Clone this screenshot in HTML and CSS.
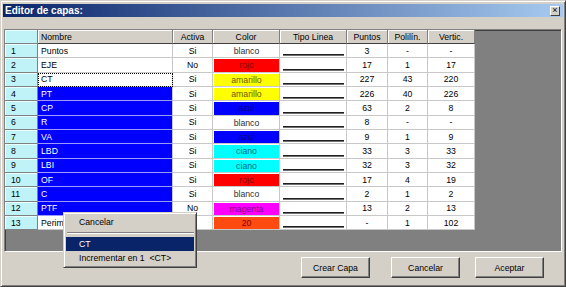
FILE: index.html
```html
<!DOCTYPE html>
<html>
<head>
<meta charset="utf-8">
<link rel="stylesheet" href="styles.css">
</head>
<body>
<div class="window">
  <div class="titlebar">
    <span class="title">Editor de capas:</span>
    <span class="close">&#215;</span>
  </div>

  <div class="panel">
    <div class="grid">
      <div class="idx"></div>
      <div class="hd left">Nombre</div>
      <div class="hd">Activa</div>
      <div class="hd">Color</div>
      <div class="hd">Tipo Linea</div>
      <div class="hd">Puntos</div>
      <div class="hd">Polilín.</div>
      <div class="hd">Vertic.</div>

      <div class="idx">1</div><div class="cell name">Puntos</div><div class="cell">Si</div><div class="cell col"><span class="c-white">blanco</span></div><div class="cell line"><span></span></div><div class="cell">3</div><div class="cell">-</div><div class="cell">-</div>
      <div class="idx">2</div><div class="cell name">EJE</div><div class="cell">No</div><div class="cell col"><span class="c-red">rojo</span></div><div class="cell line"><span></span></div><div class="cell">17</div><div class="cell">1</div><div class="cell">17</div>
      <div class="idx">3</div><div class="cell name focus">CT</div><div class="cell">Si</div><div class="cell col"><span class="c-yellow">amarillo</span></div><div class="cell line"><span></span></div><div class="cell">227</div><div class="cell">43</div><div class="cell">220</div>
      <div class="idx">4</div><div class="cell name sel">PT</div><div class="cell">Si</div><div class="cell col"><span class="c-yellow">amarillo</span></div><div class="cell line"><span></span></div><div class="cell">226</div><div class="cell">40</div><div class="cell">226</div>
      <div class="idx">5</div><div class="cell name sel">CP</div><div class="cell">Si</div><div class="cell col"><span class="c-blue">azul</span></div><div class="cell line"><span></span></div><div class="cell">63</div><div class="cell">2</div><div class="cell">8</div>
      <div class="idx">6</div><div class="cell name sel">R</div><div class="cell">Si</div><div class="cell col"><span class="c-white">blanco</span></div><div class="cell line"><span></span></div><div class="cell">8</div><div class="cell">-</div><div class="cell">-</div>
      <div class="idx">7</div><div class="cell name sel">VA</div><div class="cell">Si</div><div class="cell col"><span class="c-blue">azul</span></div><div class="cell line"><span></span></div><div class="cell">9</div><div class="cell">1</div><div class="cell">9</div>
      <div class="idx">8</div><div class="cell name sel">LBD</div><div class="cell">Si</div><div class="cell col"><span class="c-cyan">ciano</span></div><div class="cell line"><span></span></div><div class="cell">33</div><div class="cell">3</div><div class="cell">33</div>
      <div class="idx">9</div><div class="cell name sel">LBI</div><div class="cell">Si</div><div class="cell col"><span class="c-cyan">ciano</span></div><div class="cell line"><span></span></div><div class="cell">32</div><div class="cell">3</div><div class="cell">32</div>
      <div class="idx">10</div><div class="cell name sel">OF</div><div class="cell">Si</div><div class="cell col"><span class="c-red">rojo</span></div><div class="cell line"><span></span></div><div class="cell">17</div><div class="cell">4</div><div class="cell">19</div>
      <div class="idx">11</div><div class="cell name sel">C</div><div class="cell">Si</div><div class="cell col"><span class="c-white">blanco</span></div><div class="cell line"><span></span></div><div class="cell">2</div><div class="cell">1</div><div class="cell">2</div>
      <div class="idx">12</div><div class="cell name sel">PTF</div><div class="cell">No</div><div class="cell col"><span class="c-magenta">magenta</span></div><div class="cell line"><span></span></div><div class="cell">13</div><div class="cell">2</div><div class="cell">13</div>
      <div class="idx">13</div><div class="cell name">Perimetro</div><div class="cell">Si</div><div class="cell col"><span class="c-orange">20</span></div><div class="cell line"><span></span></div><div class="cell">-</div><div class="cell">1</div><div class="cell">102</div>
    </div>
  </div>

  <div class="buttons">
    <button class="btn btn-first">Crear Capa</button>
    <button class="btn">Cancelar</button>
    <button class="btn">Aceptar</button>
  </div>

  <div class="menu">
    <div class="item">Cancelar</div>
    <div class="sep"></div>
    <div class="item active">CT</div>
    <div class="item">Incrementar en 1&nbsp;&nbsp;&lt;CT&gt;</div>
  </div>
</div>
</body>
</html>
```

FILE: styles.css
```css
body {
  margin: 0;
  font-family: "Liberation Sans", Arial, sans-serif;
  font-size: 8.7px;
  color: #000;
}

.window {
  position: relative;
  box-sizing: border-box;
  width: 566px;
  height: 287px;
  background: #d4d0c8;
  border: 1px solid;
  border-color: #d4d0c8 #404040 #404040 #d4d0c8;
  box-shadow: inset 1px 1px #fff, inset -1px -1px #808080;
  padding: 3px 2px 0 2px;
}

.titlebar {
  height: 13px;
  display: flex;
  align-items: center;
  justify-content: space-between;
  padding: 0 3px 0 2px;
  background: linear-gradient(to right, #0a246a, #a6caf0);
}
.title {
  color: #fff;
  font-weight: bold;
  font-size: 10px;
}
.close {
  width: 8px;
  height: 8px;
  line-height: 7px;
  font-size: 9px;
  text-align: center;
  background: #d4d0c8;
  color: #000;
  border: 1px solid;
  border-color: #fff #404040 #404040 #fff;
}

.panel {
  box-sizing: border-box;
  height: 223px;
  margin: 12px 1px 0 1px;
  background: #808080;
  border: 1px solid;
  border-color: #808080 #fff #fff #808080;
  box-shadow: inset 1px 1px #404040;
}

.grid {
  display: grid;
  grid-template-columns: 33px 135px 40px 67px 67px 41px 40px 47px;
  grid-template-rows: 14px repeat(13, 14.33px);
  width: 470px;
}

.grid > div {
  box-sizing: border-box;
  white-space: nowrap;
  overflow: hidden;
}

.idx {
  background: #bff3f8;
  border-right: 1px solid #808080;
  border-bottom: 1px solid #808080;
  box-shadow: inset 1px 1px #eaffff;
  padding-left: 6px;
  display: flex;
  align-items: center;
}

.hd {
  background: #d4d0c8;
  border-right: 1px solid #808080;
  border-bottom: 1px solid #404040;
  box-shadow: inset 1px 1px #fff;
  display: flex;
  align-items: center;
  justify-content: center;
}
.hd.left {
  justify-content: flex-start;
  padding-left: 3px;
}

.cell {
  background: #fff;
  border-right: 1px solid #c8c8c8;
  border-bottom: 1px solid #c8c8c8;
  display: flex;
  align-items: center;
  justify-content: center;
}
.cell.name {
  justify-content: flex-start;
  padding-left: 3px;
}
.cell.sel {
  background: #0000ff;
  color: #fff;
  border-bottom-color: #9a9aff;
}
.cell.focus {
  outline: 1px dotted #000;
  outline-offset: -1px;
}

.cell.col {
  padding: 1px 0 0 1px;
  align-items: stretch;
}
.cell.col span {
  flex: 1;
  display: flex;
  align-items: center;
  justify-content: center;
}
.c-white { background: #fff; color: #303030; }
.c-red { background: #ff0000; color: #8a0000; }
.c-yellow { background: #ffff00; color: #6a5a00; }
.c-blue { background: #0000ff; color: #000080; }
.c-cyan { background: #00ffff; color: #006a80; }
.c-magenta { background: #ff00ff; color: #800080; }
.c-orange { background: #ff4a10; color: #800000; }

.cell.line {
  align-items: flex-end;
  padding: 0 2px 1px 3px;
}
.cell.line span {
  flex: 1;
  height: 0;
  border-top: 1px solid #202020;
  border-bottom: 1px solid #707070;
}

.buttons {
  display: flex;
  justify-content: flex-end;
  gap: 15px;
  margin-top: 5px;
  padding-right: 19px;
}
.btn {
  box-sizing: border-box;
  width: 69px;
  height: 21px;
  font-family: inherit;
  font-size: 8.7px;
  color: #000;
  background: #d4d0c8;
  border: 1px solid;
  border-color: #fff #404040 #404040 #fff;
  box-shadow: inset -1px -1px #808080;
  padding: 0;
}
.btn-first {
  margin-right: 6px;
}

.menu {
  position: absolute;
  left: 62px;
  top: 211px;
  width: 134px;
  box-sizing: border-box;
  background: #d4d0c8;
  border: 1px solid;
  border-color: #d4d0c8 #404040 #404040 #d4d0c8;
  box-shadow: inset 1px 1px #fff, inset -1px -1px #808080;
  padding: 2px 2px 2px 2px;
}
.item {
  height: 14px;
  line-height: 14px;
  padding-left: 13px;
  white-space: nowrap;
}
.item.active {
  background: #0a246a;
  color: #fff;
}
.sep {
  height: 0;
  margin: 3px 0 3px 1px;
  border-top: 1px solid #808080;
  border-bottom: 1px solid #fff;
}
```
